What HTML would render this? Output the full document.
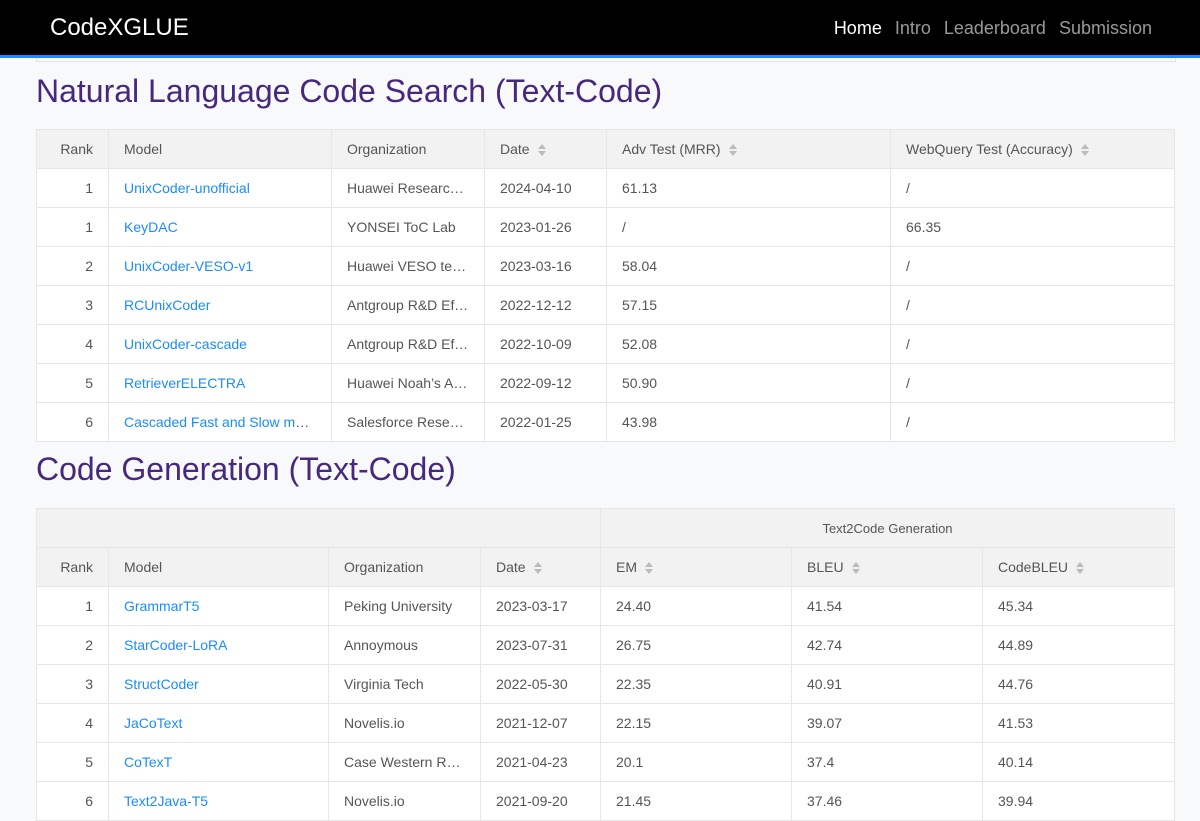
<!DOCTYPE html>
<html><head><meta charset="utf-8"><style>
body{margin:0;width:1200px;height:800px;overflow:hidden;background:#f8f9fb;font-family:"Liberation Sans",Helvetica,Arial,sans-serif;position:relative}
.nav{position:absolute;left:0;top:0;width:1200px;height:55px;background:#000;border-bottom:3px solid #1a8cff}
.brand{position:absolute;left:50px;top:14px;color:#fff;font-size:24px}
.links{position:absolute;right:48px;top:18px;font-size:18px;color:#999}
.links span{margin-left:13px}
.links .a{color:#fff}
.card{position:absolute;left:36px;top:58px;width:1138px;height:3px;border:1px solid #e4e4e4;border-top:none;background:#f8f9fb}
h1{position:absolute;left:36px;margin:0;font-weight:normal;font-size:32px;color:#47287e}
table{position:absolute;left:36px;width:1139px;border-collapse:collapse;table-layout:fixed;font-size:14px;color:#555;background:#fff}
td,th{height:38px;border:1px solid #e6e6e6;padding:0 15px;white-space:nowrap;overflow:hidden;text-overflow:ellipsis;text-align:left;font-weight:normal}
th{background:#f2f2f2;color:#555}
td.r,th.r{text-align:right}
a{color:#1a8cff;text-decoration:none}
.s{display:inline-block;vertical-align:middle;margin-left:8px;width:9px;height:12px;position:relative}
.s:before,.s:after{content:"";position:absolute;left:0;border-left:4.5px solid transparent;border-right:4.5px solid transparent}
.s:before{top:0;border-bottom:5px solid #bbb}
.s:after{bottom:0;border-top:5px solid #bbb}
th.c{text-align:center;font-size:13px}
</style></head><body>
<div class="nav"><div class="brand">CodeXGLUE</div><div class="links"><span class="a">Home</span><span>Intro</span><span>Leaderboard</span><span>Submission</span></div></div>
<div class="card"></div>
<h1 style="top:73px">Natural Language Code Search (Text-Code)</h1>
<table style="top:129px">
<colgroup><col style="width:72px"><col style="width:223px"><col style="width:153px"><col style="width:122px"><col style="width:284px"><col></colgroup>
<tr><th class="r">Rank</th><th>Model</th><th>Organization</th><th>Date<i class="s"></i></th><th>Adv Test (MRR)<i class="s"></i></th><th>WebQuery Test (Accuracy)<i class="s"></i></th></tr>
<tr><td class="r">1</td><td><a>UnixCoder-unofficial</a></td><td>Huawei Research Center</td><td>2024-04-10</td><td>61.13</td><td>/</td></tr>
<tr><td class="r">1</td><td><a>KeyDAC</a></td><td>YONSEI ToC Lab</td><td>2023-01-26</td><td>/</td><td>66.35</td></tr>
<tr><td class="r">2</td><td><a>UnixCoder-VESO-v1</a></td><td>Huawei VESO team</td><td>2023-03-16</td><td>58.04</td><td>/</td></tr>
<tr><td class="r">3</td><td><a>RCUnixCoder</a></td><td>Antgroup R&amp;D Efficiency</td><td>2022-12-12</td><td>57.15</td><td>/</td></tr>
<tr><td class="r">4</td><td><a>UnixCoder-cascade</a></td><td>Antgroup R&amp;D Efficiency</td><td>2022-10-09</td><td>52.08</td><td>/</td></tr>
<tr><td class="r">5</td><td><a>RetrieverELECTRA</a></td><td>Huawei Noah’s Ark Lab</td><td>2022-09-12</td><td>50.90</td><td>/</td></tr>
<tr><td class="r">6</td><td><a>Cascaded Fast and Slow models</a></td><td>Salesforce Research</td><td>2022-01-25</td><td>43.98</td><td>/</td></tr>
</table>
<h1 style="top:451px">Code Generation (Text-Code)</h1>
<table style="top:508px">
<colgroup><col style="width:72px"><col style="width:220px"><col style="width:152px"><col style="width:120px"><col style="width:191px"><col style="width:191px"><col></colgroup>
<tr><th colspan="4"></th><th colspan="3" class="c">Text2Code Generation</th></tr>
<tr><th class="r">Rank</th><th>Model</th><th>Organization</th><th>Date<i class="s"></i></th><th>EM<i class="s"></i></th><th>BLEU<i class="s"></i></th><th>CodeBLEU<i class="s"></i></th></tr>
<tr><td class="r">1</td><td><a>GrammarT5</a></td><td>Peking University</td><td>2023-03-17</td><td>24.40</td><td>41.54</td><td>45.34</td></tr>
<tr><td class="r">2</td><td><a>StarCoder-LoRA</a></td><td>Annoymous</td><td>2023-07-31</td><td>26.75</td><td>42.74</td><td>44.89</td></tr>
<tr><td class="r">3</td><td><a>StructCoder</a></td><td>Virginia Tech</td><td>2022-05-30</td><td>22.35</td><td>40.91</td><td>44.76</td></tr>
<tr><td class="r">4</td><td><a>JaCoText</a></td><td>Novelis.io</td><td>2021-12-07</td><td>22.15</td><td>39.07</td><td>41.53</td></tr>
<tr><td class="r">5</td><td><a>CoTexT</a></td><td>Case Western Reserve University</td><td>2021-04-23</td><td>20.1</td><td>37.4</td><td>40.14</td></tr>
<tr><td class="r">6</td><td><a>Text2Java-T5</a></td><td>Novelis.io</td><td>2021-09-20</td><td>21.45</td><td>37.46</td><td>39.94</td></tr>
</table>
</body></html>
